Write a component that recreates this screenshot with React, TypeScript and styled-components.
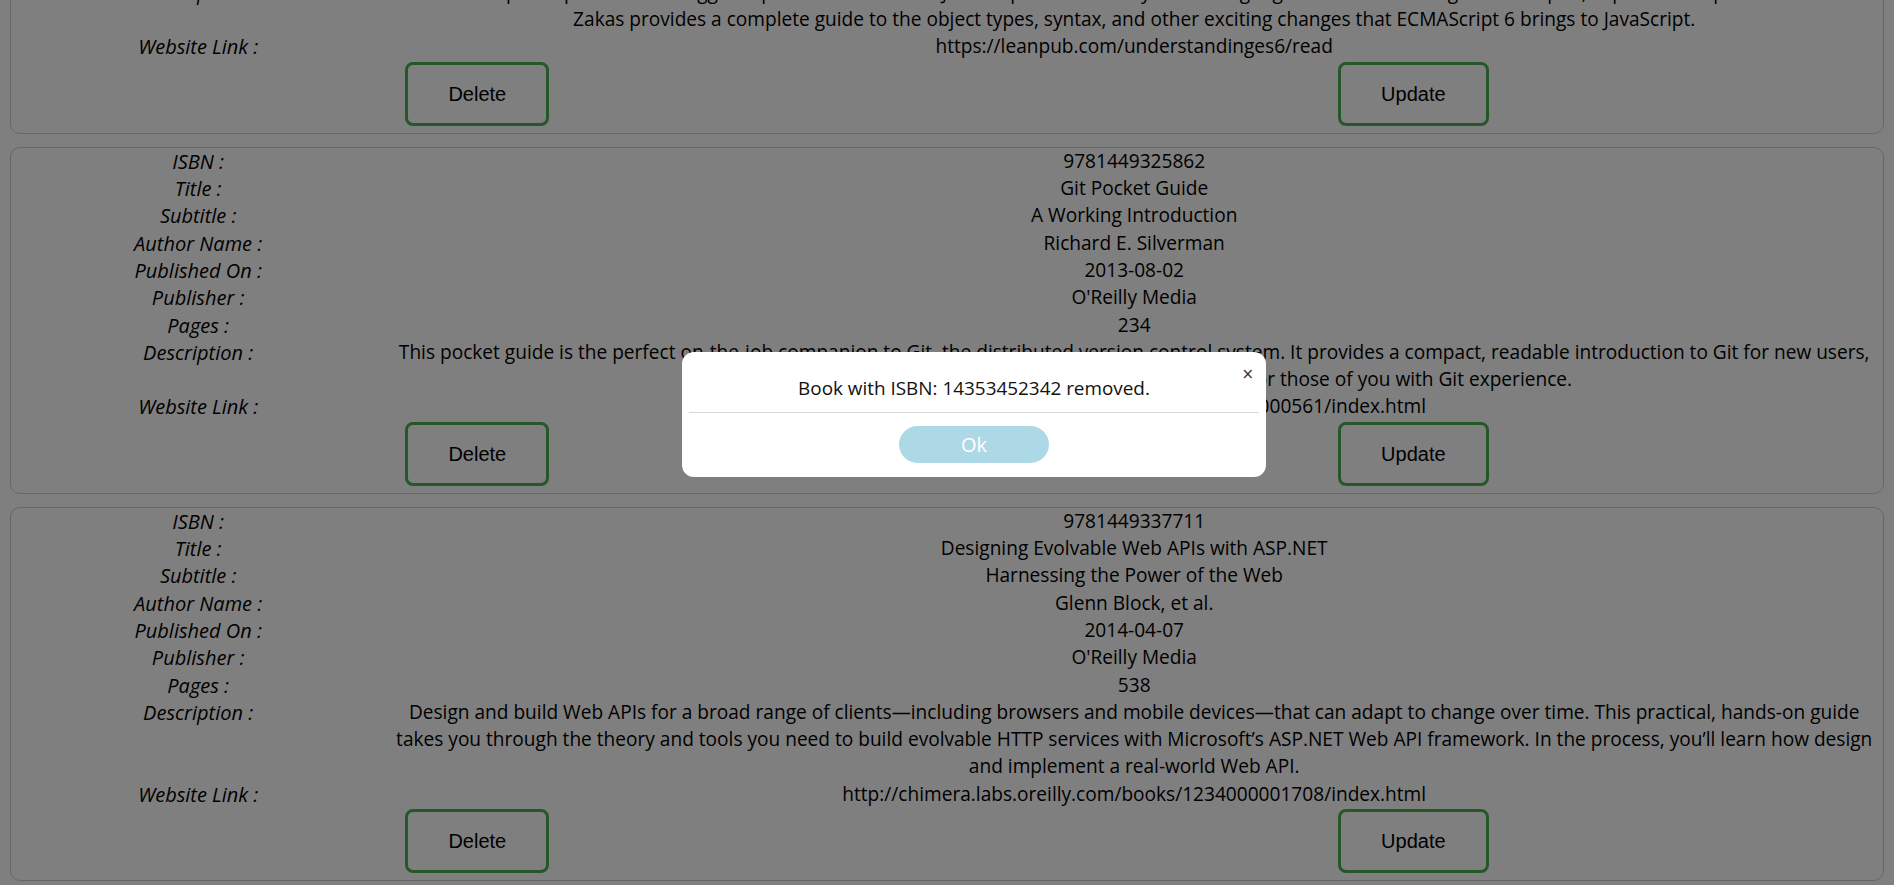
import React from "react";
import styled, { createGlobalStyle } from "styled-components";

const GlobalStyle = createGlobalStyle`
  html, body {
    margin: 0;
    padding: 0;
    background: #ffffff;
  }
  body {
    font-family: "Open Sans", "Noto Sans", sans-serif;
    color: #000;
    overflow: hidden;
  }
`;

type Book = {
  isbn: string;
  title: string;
  subtitle: string;
  author: string;
  published: string;
  publisher: string;
  pages: number;
  description: string;
  website: string;
};

const books: Book[] = [
  {
    isbn: "9781593277574",
    title: "Understanding ECMAScript 6",
    subtitle: "The Definitive Guide for JavaScript Developers",
    author: "Nicholas C. Zakas",
    published: "2016-09-03",
    publisher: "No Starch Press",
    pages: 352,
    description:
      "ECMAScript 6 represents the biggest update to the core of JavaScript in the history of the language. In Understanding ECMAScript 6, expert developer Nicholas C.\nZakas provides a complete guide to the object types, syntax, and other exciting changes that ECMAScript 6 brings to JavaScript.",
    website: "https://leanpub.com/understandinges6/read",
  },
  {
    isbn: "9781449325862",
    title: "Git Pocket Guide",
    subtitle: "A Working Introduction",
    author: "Richard E. Silverman",
    published: "2013-08-02",
    publisher: "O'Reilly Media",
    pages: 234,
    description:
      "This pocket guide is the perfect on-the-job companion to Git, the distributed version control system. It provides a compact, readable introduction to Git for new users, as well as a reference to common commands and procedures for those of you with Git experience.",
    website: "http://chimera.labs.oreilly.com/books/1230000000561/index.html",
  },
  {
    isbn: "9781449337711",
    title: "Designing Evolvable Web APIs with ASP.NET",
    subtitle: "Harnessing the Power of the Web",
    author: "Glenn Block, et al.",
    published: "2014-04-07",
    publisher: "O'Reilly Media",
    pages: 538,
    description:
      "Design and build Web APIs for a broad range of clients\u2014including browsers and mobile devices\u2014that can adapt to change over time. This practical, hands-on guide takes you through the theory and tools you need to build evolvable HTTP services with Microsoft\u2019s ASP.NET Web API framework. In the process, you\u2019ll learn how design and implement a real-world Web API.",
    website: "http://chimera.labs.oreilly.com/books/1234000001708/index.html",
  },
];

const Viewport = styled.main`
  height: 100vh;
  overflow: hidden;
  display: flex;
  flex-direction: column;
  justify-content: flex-end;
  gap: 13px;
  padding: 0 10px 4px;
  box-sizing: border-box;
`;

const Card = styled.article`
  flex-shrink: 0;
  border: 1px solid #cccccc;
  border-radius: 10px;
  display: grid;
  grid-template-columns: 1fr 4fr;
  font-size: 19.1px;
  line-height: 27.3px;
`;

const Label = styled.div`
  font-style: italic;
  font-size: 20px;
  text-align: center;
`;

const Value = styled.div`
  text-align: center;
  padding: 0 8px;
  white-space: pre-line;
`;

const Actions = styled.div`
  grid-column: 1 / -1;
  display: flex;
  justify-content: space-around;
  padding: 1px 0 7px;
`;

const ActionButton = styled.button`
  font-family: "Liberation Sans", Arial, sans-serif;
  font-size: 20px;
  line-height: 22px;
  padding: 18px 40px;
  border: 3px solid #4caf50;
  border-radius: 8px;
  background: #ffffff;
  color: #000;
  cursor: pointer;
`;

const Overlay = styled.div`
  position: fixed;
  inset: 0;
  background: rgba(0, 0, 0, 0.5);
`;

const Dialog = styled.div`
  position: fixed;
  left: 682px;
  top: 352px;
  width: 584px;
  box-sizing: border-box;
  padding: 22px 7px 14px;
  background: #ffffff;
  border-radius: 12px;
  text-align: center;
  display: flex;
  flex-direction: column;
  align-items: center;
`;

const CloseButton = styled.button`
  position: absolute;
  top: 12px;
  right: 12px;
  border: none;
  background: transparent;
  padding: 0;
  font-family: "DejaVu Sans", sans-serif;
  font-size: 15px;
  line-height: 20px;
  color: #333;
  cursor: pointer;
`;

const Message = styled.p`
  margin: 0;
  font-size: 18.9px;
  line-height: 28px;
  color: #111;
`;

const Divider = styled.hr`
  align-self: stretch;
  border: none;
  border-top: 1px solid #d6d6d6;
  margin: 10px 0 13px;
`;

const OkButton = styled.button`
  width: 150px;
  height: 37px;
  border: none;
  border-radius: 19px;
  background: #add8e6;
  color: #ffffff;
  font-family: "Open Sans", sans-serif;
  font-size: 20px;
  cursor: pointer;
`;

const BookCard: React.FC<{ book: Book }> = ({ book }) => {
  const rows: [string, React.ReactNode][] = [
    ["ISBN", book.isbn],
    ["Title", book.title],
    ["Subtitle", book.subtitle],
    ["Author Name", book.author],
    ["Published On", book.published],
    ["Publisher", book.publisher],
    ["Pages", book.pages],
    ["Description", book.description],
    ["Website Link", book.website],
  ];
  return (
    <Card>
      {rows.map(([label, value]) => (
        <React.Fragment key={label}>
          <Label>{label} :</Label>
          <Value>{value}</Value>
        </React.Fragment>
      ))}
      <Actions>
        <ActionButton>Delete</ActionButton>
        <ActionButton>Update</ActionButton>
      </Actions>
    </Card>
  );
};

export default function App() {
  return (
    <>
      <GlobalStyle />
      <Viewport>
        {books.map((b) => (
          <BookCard key={b.isbn} book={b} />
        ))}
      </Viewport>
      <Overlay />
      <Dialog role="dialog">
        <CloseButton aria-label="close">×</CloseButton>
        <Message>Book with ISBN: 14353452342 removed.</Message>
        <Divider />
        <OkButton>Ok</OkButton>
      </Dialog>
    </>
  );
}
